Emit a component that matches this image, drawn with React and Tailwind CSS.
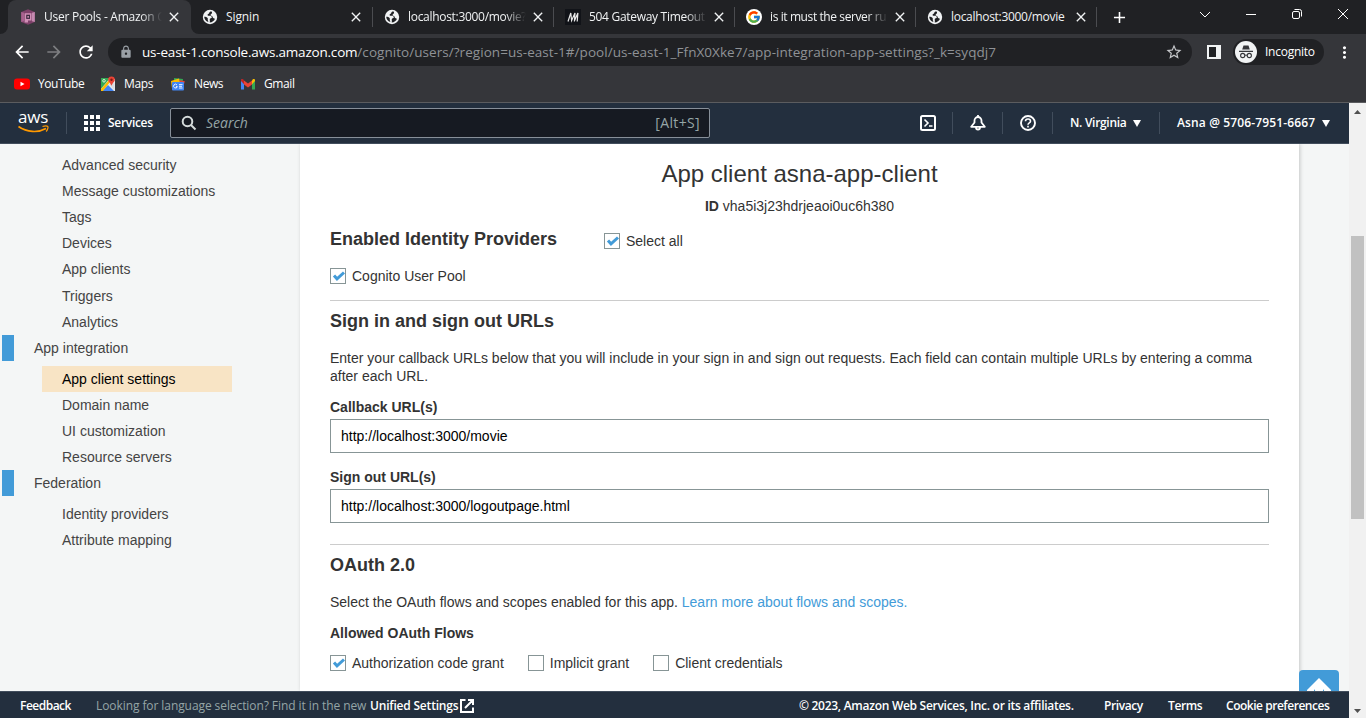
import React from "react";
import {
  MdArrowBack, MdArrowForward, MdRefresh, MdLock, MdStarBorder, MdMoreVert, MdClose, MdAdd,
} from "react-icons/md";
import { FcGoogle } from "react-icons/fc";

const Cognito = () => (
  <svg viewBox="0 0 16 16" className="h-4 w-4 shrink-0">
    <path d="M8 .3 14.800 3v10L8 15.700 1.200 13V3z" fill="#7d4069" />
    <path d="M1.200 3 4 3.800v8.400L1.200 13z" fill="#a8628f" />
    <path d="M14.800 3 12 3.800v8.400l2.800.8z" fill="#c58ab0" />
    <path d="M4.600 4.200h6.900v7.300H8v1.900H4.600z" fill="#d08fb6" />
    <path d="M6.200 5.700h3.800v4.200H6.200z" fill="#3c2a40" />
    <path d="M7.400 7h1.500v1.700H7.400z" fill="#d08fb6" />
  </svg>
);

const Globe = () => (
  <svg viewBox="0 0 16 16" className="h-4 w-4 shrink-0">
    <circle cx="8" cy="8" r="7.200" fill="#f1f3f4" />
    <path d="M9.600 2.500C8.200 2.300 7.300 3 7.200 4c-.1.700-1 .7-1.400 1.200-.5.700-.1 1.500.8 1.600 1.100.1 2.300-.1 2.900.6.6.800.200 1.600-.7 1.900-1 .300-1.200 1-1 2 .1.800.1 1.400-.1 2.200 2.600-.1 4.500-1.800 5.300-3.800-.6-.2-1.200-.2-1.700-.6-.7-.6-.4-1.300-1-1.900-.5-.5-1.300-.3-1.600-1-.3-.8.500-1.200 1.100-1.600.5-.5.200-1.500-.2-2.100z" fill="#202124" />
    <path d="M2.200 7.800c1.400 0 2.800.4 3.400 1.300.5.800-.1 1.500.3 2.300.200.500.500.9.400 1.700-2.400-.7-4-2.800-4.100-5.300z" fill="#202124" />
  </svg>
);

const MIcon = () => (
  <svg viewBox="0 0 16 16" className="h-4 w-4 shrink-0">
    <rect width="16" height="16" fill="#111318" />
    <path d="M3 12.500 5.800 4l.8 7.500L10 4l-.6 8.500M9.600 11.500 12.900 4l-.7 8.500" fill="none" stroke="#e8e8e8" strokeWidth="1.200" />
  </svg>
);

const GoogleIcon = () => (
  <span className="flex h-4 w-4 shrink-0 items-center justify-center rounded-full bg-white">
    <FcGoogle size={14} />
  </span>
);

function Tab({ icon, label, active, fade, className = "w-[181px] pl-[11px]" }) {
  return (
    <div className={`relative flex h-[34px] items-center ${active ? "rounded-t-lg bg-[#35363a]" : ""} ${className}`}>
      {icon}
      <span className={`ml-2 w-[118px] whitespace-nowrap text-xs text-[#f1f3f4] ${fade ? "[mask-image:linear-gradient(90deg,#000_82%,transparent)]" : ""}`}>
        {label}
      </span>
      <MdClose className="ml-1 shrink-0 text-[#f1f3f4]" size={16} />
      {!active && <span className="absolute right-0 top-[7px] h-5 w-px bg-[#4b4c50]" />}
    </div>
  );
}

function BrowserTop() {
  return (
    <header className="h-[103px] border-b border-[#5b5c5f] bg-[#35363a] font-['Open_Sans',sans-serif] text-white">
      <div className="flex h-[34px] bg-[#202124]">
        <div className="w-2 shrink-0 bg-[#35363a]"><div className="h-full rounded-br-lg bg-[#202124]" /></div>
        <Tab active fade icon={<Cognito />} label={<span className="tracking-[-0.26px]">User Pools - Amazon C</span>} className="w-[183px] pl-[12px]" />
        <div className="w-2 shrink-0 bg-[#35363a]"><div className="h-full rounded-bl-lg bg-[#202124]" /></div>
        <Tab icon={<Globe />} label={<span className="tracking-[-0.1px]">Signin</span>} className="w-[174px] pl-[3px]" />
        <Tab fade icon={<Globe />} label={<span className="tracking-[-0.3px]">localhost:3000/movie?</span>} />
        <Tab fade icon={<MIcon />} label={<span className="tracking-[-0.3px]">504 Gateway Timeout</span>} />
        <Tab fade icon={<GoogleIcon />} label={<span className="tracking-[-0.4px]">is it must the server ru</span>} />
        <Tab icon={<Globe />} label={<span className="tracking-[-0.3px]">localhost:3000/movie</span>} />
        <div className="flex w-[44px] items-center justify-center"><MdAdd size={19} /></div>
        <div className="ml-auto flex items-start pt-[6px]">
          <svg className="h-4 w-[46px]" viewBox="0 0 46 16"><path d="m18 6 5 5 5-5" fill="none" stroke="#fff" /></svg>
          <svg className="h-4 w-[46px]" viewBox="0 0 46 16"><path d="M18 8.500h10" stroke="#fff" /></svg>
          <svg className="h-4 w-[46px]" viewBox="0 0 46 16"><rect x="18.500" y="5.500" width="7" height="7" rx="1.500" fill="none" stroke="#fff" /><path d="M20.500 3.500h5a2 2 0 0 1 2 2v5" fill="none" stroke="#fff" /></svg>
          <svg className="h-4 w-[46px]" viewBox="0 0 46 16"><path d="m18 3 10 10M28 3 18 13" stroke="#fff" /></svg>
        </div>
      </div>
      <div className="flex h-9 items-center pl-[12px] pr-3">
        <MdArrowBack size={20} className="shrink-0" />
        <MdArrowForward size={20} className="ml-3 shrink-0 text-[#7d7e81]" />
        <MdRefresh size={20} className="ml-3 shrink-0" />
        <div className="ml-3 flex h-7 w-[1084px] shrink-0 items-center rounded-full bg-[#202124] pl-[11px] pr-[9px]">
          <MdLock size={14} className="text-[#9aa0a6]" />
          <span className="ml-[9px] whitespace-nowrap text-[13.500px] tracking-[0.050px] text-[#8f9296]">
            <span className="tracking-[-0.2px] text-white">us-east-1.console.aws.amazon.com</span>/cognito/users/?region=us-east-1#/pool/us-east-1_FfnX0Xke7/app-integration-app-settings?_k=syqdj7
          </span>
          <MdStarBorder size={18} className="ml-auto text-[#c5c7ca]" />
        </div>
        <svg viewBox="0 0 14 14" className="ml-[15px] h-[14px] w-[14px] shrink-0"><path fill="#f1f3f4" d="M0 0h14v14H0z" /><path fill="#202124" d="M2 2h7v10H2z" /></svg>
        <div className="ml-[12px] flex h-[26px] w-[91px] shrink-0 items-center rounded-full bg-[#202124] pl-[2px]">
          <svg viewBox="0 0 22 22" className="h-[22px] w-[22px] shrink-0">
            <circle cx="11" cy="11" r="11" fill="#f1f3f4" />
            <path d="M8.500 4.500h5l1.300 4H7.200zM4 9.700h14v1.200H4z" fill="#35363a" />
            <circle cx="7.700" cy="14.500" r="2.100" fill="none" stroke="#35363a" strokeWidth="1.100" />
            <circle cx="14.300" cy="14.500" r="2.100" fill="none" stroke="#35363a" strokeWidth="1.100" />
            <path d="M9.800 14.200h2.400" stroke="#35363a" />
          </svg>
          <span className="ml-2 text-xs tracking-[-0.25px]">Incognito</span>
        </div>
        <MdMoreVert size={19} className="ml-[11px] shrink-0" />
      </div>
      <div className="flex h-7 items-center pl-[14px] text-xs">
        <svg viewBox="0 0 16 16" className="h-4 w-4"><rect y="2.500" width="16" height="11" rx="3" fill="#f00" /><path d="m6.500 5.700 4 2.300-4 2.300z" fill="#fff" /></svg>
        <span className="ml-2 w-[62px] tracking-[-0.45px]">YouTube</span>
        <svg viewBox="0 0 16 16" className="h-4 w-4">
          <path d="M1 3h14v12H1z" fill="#e8eaed" /><path d="M1 2h9L1 13z" fill="#34a853" /><path d="m2 15 6-6 6 6z" fill="#4285f4" /><path d="m1 13 8-9 1.500 1.500L3 15H1z" fill="#fbbc04" /><path d="m9 8 5.500 6.500V7z" fill="#dadce0" />
          <path d="M11.500.5A3.300 3.300 0 0 0 8.200 3.800c0 2 2 2.700 3.300 6 1.200-3.300 3.300-4 3.300-6A3.300 3.300 0 0 0 11.500.5" fill="#ea4335" /><circle cx="11.500" cy="3.800" r="1.200" fill="#7b1a14" />
          <circle cx="4" cy="4.800" r="1.300" fill="none" stroke="#fff" strokeWidth=".8" />
        </svg>
        <span className="ml-2 w-[46px] tracking-[-0.35px]">Maps</span>
        <svg viewBox="0 0 16 16" className="h-4 w-4">
          <path d="m4 2 9 1-1 8H4z" fill="#34a853" /><path d="m1 5 8-2.500 2 7-9 3z" fill="#fbbc04" /><path d="m9 4 5.800 1.200L13 12z" fill="#ea4335" />
          <rect x="2" y="6" width="12" height="8.500" rx="1" fill="#4285f4" />
          <path d="M7 9A1.900 1.900 0 1 0 7.300 10.600H6M9 8.600h3.500M9 10.300h3M9 12h3.500" fill="none" stroke="#fff" strokeWidth=".9" />
        </svg>
        <span className="ml-2 w-[46px] tracking-[-0.4px]">News</span>
        <svg viewBox="0 0 16 16" className="h-4 w-4">
          <path d="M1 3v10.500h3V7z" fill="#4285f4" /><path d="M15 3v10.500h-3V7z" fill="#34a853" />
          <path d="M4 4.500v4L8 11.500l4-3v-4L8 7.500z" fill="#ea4335" />
          <path d="M1 4.200V5l3 3.300V4.500L3.200 3.300C2.200 2.500 1 3.200 1 4.200" fill="#c5221f" /><path d="M15 4.200V5l-3 3.300V4.500l.8-1.200C13.800 2.500 15 3.200 15 4.200" fill="#fbbc04" />
        </svg>
        <span className="ml-2 tracking-[-0.4px]">Gmail</span>
      </div>
    </header>
  );
}

const Divider = ({ className }) => <span className={`h-[22px] w-px shrink-0 bg-[#414d5c] ${className}`} />;
const Caret = ({ className }) => (
  <svg viewBox="0 0 8 7" className={`h-[7px] w-2 shrink-0 ${className}`}><path d="M0 0h8L4 7z" fill="#fff" /></svg>
);

function AwsNav() {
  return (
    <nav className="flex h-[41px] shrink-0 items-center border-b border-[#414d5c] bg-[#232f3e] pl-[18px] font-['Open_Sans',sans-serif] text-xs font-semibold text-white">
      <div className="relative h-[22px] w-[31px] shrink-0">
        <span className="absolute left-0 top-[-5px] text-[17px] font-medium leading-5 tracking-[-0.2px]">aws</span>
        <svg viewBox="0 0 31 9" className="absolute left-0 top-[13px] h-[9px] w-[31px]">
          <path d="M.5 1.500C9 7.500 20 8 28 3.500" fill="none" stroke="#f90" strokeWidth="1.700" />
          <path d="M24.500 1.500c2-.7 4.500-.8 5.300 0 .6.800-.3 3.500-1.700 5" fill="none" stroke="#f90" strokeWidth="1.200" />
        </svg>
      </div>
      <Divider className="ml-[17px]" />
      <svg viewBox="0 0 16 16" className="ml-[17px] h-4 w-4 shrink-0" fill="#fff">
        <path d="M0 0h4v4H0zM6 0h4v4H6zM12 0h4v4h-4zM0 6h4v4H0zM6 6h4v4H6zM12 6h4v4h-4zM0 12h4v4H0zM6 12h4v4H6zM12 12h4v4h-4z" />
      </svg>
      <span className="ml-2 w-[62px] shrink-0 tracking-[-0.3px]">Services</span>
      <div className="flex h-[30px] w-[540px] shrink-0 items-center rounded-[2px] border border-[#878f99] bg-[#161a22] pl-[10px] pr-[9px] text-sm font-normal text-[#95a5a6]">
        <svg viewBox="0 0 16 16" className="h-4 w-4" fill="none" stroke="#d5dbdb" strokeWidth="2"><circle cx="6.500" cy="6.500" r="4.800" /><path d="m10 10 4.500 4.500" /></svg>
        <span className="ml-[9px] italic">Search</span>
        <span className="ml-auto tracking-[0.35px]">[Alt+S]</span>
      </div>
      <svg viewBox="0 0 16 16" className="ml-[210px] h-4 w-4 shrink-0" fill="none" stroke="#fff" strokeWidth="2"><rect x="1" y="1" width="14" height="14" rx="1.500" /><path d="m4.500 4.500 3.500 3.500-3.500 3.500M9 11h3.500" strokeWidth="1.600" /></svg>
      <Divider className="ml-4" />
      <svg viewBox="0 0 16 16" className="ml-[17px] h-4 w-4 shrink-0" fill="none" stroke="#fff" strokeWidth="1.800"><path d="M8 0v2M1.200 11.800h13.600L11.500 7.500V5.500a3.500 3.500 0 0 0-7 0v2zM6 12.500a2 2 0 0 0 4 0" strokeLinejoin="round" /></svg>
      <Divider className="ml-4" />
      <svg viewBox="0 0 16 16" className="ml-[17px] h-4 w-4 shrink-0" fill="none" stroke="#fff" strokeWidth="1.900"><circle cx="8" cy="8" r="7" /><path d="M5.500 6.300c0-3 5-3 5 0 0 1.600-2.500 1.500-2.500 3.400M8 10.800v1.700" strokeWidth="1.600" /></svg>
      <Divider className="ml-4" />
      <span className="ml-[17px] w-[57px] shrink-0 whitespace-nowrap tracking-[-0.3px]">N. Virginia</span>
      <Caret className="ml-[6px]" />
      <Divider className="ml-[18px]" />
      <span className="ml-[17px] w-[139px] shrink-0 whitespace-nowrap tracking-[0.13px]">Asna @ 5706-7951-6667</span>
      <Caret className="ml-[6px]" />
    </nav>
  );
}

const Item = ({ children, on }) => (
  <div className={`ml-[42px] flex h-[26px] w-[190px] shrink-0 items-center pl-5 ${on ? "bg-[#f8e4c5] text-black" : ""}`}>{children}</div>
);
const Section = ({ children }) => (
  <div className="mb-[5px] flex h-[26px] shrink-0 items-center pl-[2px]">
    <span className="mr-5 h-full w-3 bg-[#429bd8]" />
    {children}
  </div>
);

function Sidebar() {
  return (
    <aside className="flex w-[300px] shrink-0 flex-col pt-[8px] text-sm text-[#444]">
      <Item>Advanced security</Item>
      <Item>Message customizations</Item>
      <Item>Tags</Item>
      <Item>Devices</Item>
      <Item>App clients</Item>
      <div className="mt-px" />
      <Item>Triggers</Item>
      <Item>Analytics</Item>
      <Section>App integration</Section>
      <Item on>App client settings</Item>
      <Item>Domain name</Item>
      <Item>UI customization</Item>
      <Item>Resource servers</Item>
      <Section>Federation</Section>
      <Item>Identity providers</Item>
      <Item>Attribute mapping</Item>
    </aside>
  );
}

function Check({ label, checked }) {
  return (
    <label className="flex h-4 items-center">
      <span className="mr-[6px] h-4 w-4 border border-[#879596] bg-white">
        {checked && (
          <svg viewBox="0 0 14 14" className="h-[14px] w-[14px]"><path d="m3 6.500 3 3.300 7-6.300" fill="none" stroke="#429bd8" strokeWidth="3" /></svg>
        )}
      </span>
      {label}
    </label>
  );
}

const Heading = ({ children, className }) => <h2 className={`h-6 text-lg leading-6 font-bold ${className}`}>{children}</h2>;
const Field = ({ children }) => (
  <div className="flex h-[34px] items-center border border-[#879596] pl-[10px] text-black">{children}</div>
);

function Content() {
  return (
    <main className="w-[999px] shrink-0 bg-white px-[30px] text-sm leading-[18px] text-[#333] shadow-[1px_0_4px_rgba(0,0,0,0.2)]">
      <h1 className="mt-[14px] h-8 text-center text-2xl leading-8">App client asna-app-client</h1>
      <p className="mt-[7px] text-center"><b>ID</b> vha5i3j23hdrjeaoi0uc6h380</p>
      <div className="mt-[12px] flex h-6">
        <Heading className="w-[274px]">Enabled Identity Providers</Heading>
        <div className="pt-[6px]"><Check checked label="Select all" /></div>
      </div>
      <div className="mt-[17px]"><Check checked label="Cognito User Pool" /></div>
      <hr className="mt-4 border-[#ccc]" />
      <Heading className="mt-2">Sign in and sign out URLs</Heading>
      <p className="mt-4">Enter your callback URLs below that you will include in your sign in and sign out requests. Each field can contain multiple URLs by entering a comma after each URL.</p>
      <div className="mt-[13px] mb-[3px] font-bold">Callback URL(s)</div>
      <Field>http://localhost:3000/movie</Field>
      <div className="mt-[15px] mb-[3px] font-bold">Sign out URL(s)</div>
      <Field>http://localhost:3000/logoutpage.html</Field>
      <hr className="mt-[21px] border-[#ccc]" />
      <Heading className="mt-2">OAuth 2.0</Heading>
      <p className="mt-4">Select the OAuth flows and scopes enabled for this app. <a className="text-[#429bd8]">Learn more about flows and scopes.</a></p>
      <div className="mt-[13px] font-bold">Allowed OAuth Flows</div>
      <div className="mt-[13px] flex gap-6">
        <Check checked label="Authorization code grant" />
        <Check label="Implicit grant" />
        <Check label="Client credentials" />
      </div>
    </main>
  );
}

function Footer() {
  return (
    <footer className="flex h-[27px] shrink-0 items-center border-t border-[#414d5c] bg-[#232f3e] pl-5 pt-[2px] font-['Open_Sans',sans-serif] text-xs font-semibold whitespace-nowrap text-white">
      <span className="w-[76px] shrink-0 tracking-[-0.5px]">Feedback</span>
      <span className="w-[274px] shrink-0 font-normal tracking-[-0.08px] text-[#95a5a6]">Looking for language selection? Find it in the new</span>
      <span className="w-[89px] shrink-0 tracking-[-0.2px]">Unified Settings</span>
      <svg viewBox="0 0 14 14" className="ml-[1px] h-[14px] w-[14px] shrink-0" fill="none" stroke="#fff" strokeWidth="2"><path d="M5.500 1H1v12h12V8.500M8 1h5v5M12.500 1.500 5 9" /></svg>
      <span className="ml-[325px] w-[305px] shrink-0 tracking-[-0.28px]">© 2023, Amazon Web Services, Inc. or its affiliates.</span>
      <span className="w-[64px] shrink-0 tracking-[-0.4px]">Privacy</span>
      <span className="w-[58px] shrink-0 tracking-[-0.4px]">Terms</span>
      <span className="shrink-0 tracking-[-0.47px]">Cookie preferences</span>
    </footer>
  );
}

export default function App() {
  return (
    <div className="flex h-[718px] w-[1366px] flex-col overflow-hidden font-['Liberation_Sans',Arial,sans-serif]">
      <BrowserTop />
      <div className="flex h-[615px]">
        <div className="flex w-[1349px] shrink-0 flex-col">
          <AwsNav />
          <div className="relative flex h-[547px] overflow-hidden bg-[#f4f6f6]">
            <Sidebar />
            <Content />
            <button className="absolute left-[1299px] top-[526px] h-10 w-10 rounded bg-[#429bd8]">
              <svg viewBox="0 0 40 40" className="h-10 w-10"><path d="M20 8 32 20v4H8v-4z" fill="#fff" /><path d="m14.500 22 1-3 1 3zM23.500 22l1-3 1 3z" fill="#429bd8" /></svg>
            </button>
          </div>
          <Footer />
        </div>
        <div className="flex w-[17px] flex-col items-center bg-[#f1f1f1]">
          <svg viewBox="0 0 7 4" className="mt-[7px] h-1 w-[7px]"><path d="M3.500 0 7 4H0z" fill="#505050" /></svg>
          <div className="mt-[122px] h-[283px] w-[13px] bg-[#c1c1c1]" />
          <svg viewBox="0 0 7 4" className="mt-auto mb-[5px] h-1 w-[7px]"><path d="M0 0h7L3.500 4z" fill="#505050" /></svg>
        </div>
      </div>
    </div>
  );
}
